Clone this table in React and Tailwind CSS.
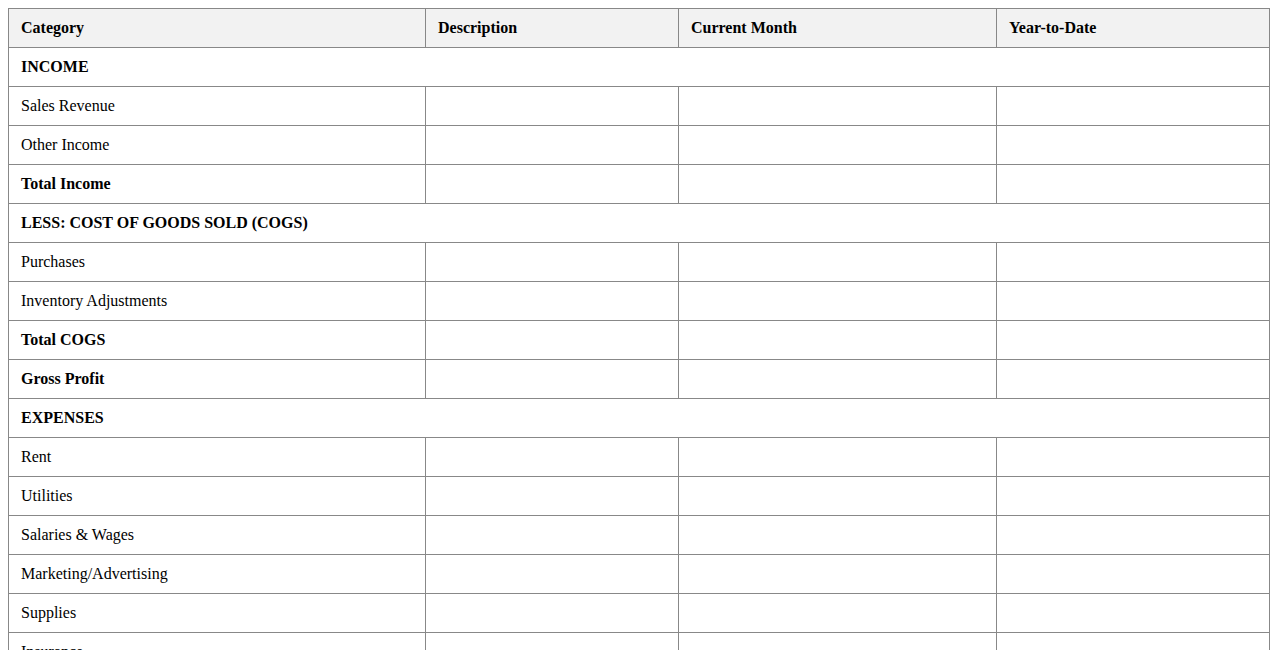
import React from "react";

const rows = [
  { type: "section", label: "INCOME" },
  { label: "Sales Revenue" },
  { label: "Other Income" },
  { label: "Total Income", bold: true },
  { type: "section", label: "LESS: COST OF GOODS SOLD (COGS)" },
  { label: "Purchases" },
  { label: "Inventory Adjustments" },
  { label: "Total COGS", bold: true },
  { label: "Gross Profit", bold: true },
  { type: "section", label: "EXPENSES" },
  { label: "Rent" },
  { label: "Utilities" },
  { label: "Salaries & Wages" },
  { label: "Marketing/Advertising" },
  { label: "Supplies" },
  { label: "Insurance" },
  { label: "Other Expenses" },
  { label: "Total Expenses", bold: true },
  { label: "Net Profit (Loss)", bold: true },
];

const cell = "border border-[#888] px-3 py-[10px] text-left align-middle";

export default function App() {
  return (
    <div className="p-2 bg-white text-black" style={{ fontFamily: '"Liberation Serif", "Times New Roman", serif' }}>
      <table className="w-full border-collapse text-[16px] leading-[18px]">
        <thead>
          <tr className="bg-[#f2f2f2]">
            <th className={`${cell} font-bold w-[417px]`}>Category</th>
            <th className={`${cell} font-bold w-[253px]`}>Description</th>
            <th className={`${cell} font-bold w-[318px]`}>Current Month</th>
            <th className={`${cell} font-bold`}>Year-to-Date</th>
          </tr>
        </thead>
        <tbody>
          {rows.map((r, i) =>
            r.type === "section" ? (
              <tr key={i}>
                <td colSpan={4} className={`${cell} font-bold`}>{r.label}</td>
              </tr>
            ) : (
              <tr key={i}>
                <td className={`${cell} ${r.bold ? "font-bold" : ""}`}>{r.label}</td>
                <td className={cell}></td>
                <td className={cell}></td>
                <td className={cell}></td>
              </tr>
            )
          )}
        </tbody>
      </table>
    </div>
  );
}
